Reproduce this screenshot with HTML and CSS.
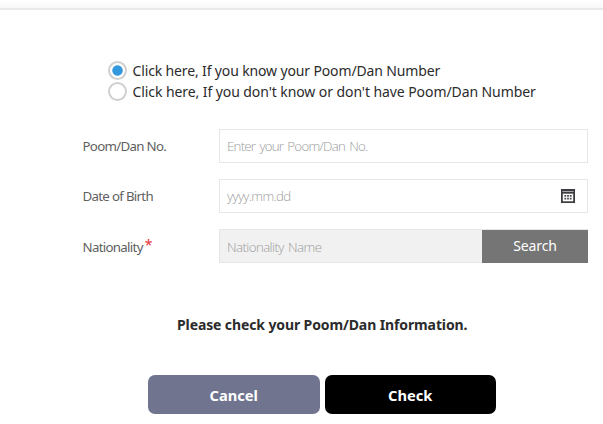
FILE: index.html
```
<!DOCTYPE html>
<html lang="en">
<head>
<meta charset="utf-8">
<title>Poom/Dan Information</title>
<link rel="stylesheet" href="styles.css">
</head>
<body>
<header class="topbar"></header>
<form class="form">
  <div class="choices">
    <label class="choice choice-known"><input class="radio" type="radio" name="known" checked><span>Click here, If you know your Poom/Dan Number</span></label>
    <label class="choice choice-unknown"><input class="radio" type="radio" name="known"><span>Click here, If you don't know or don't have Poom/Dan Number</span></label>
  </div>
  <div class="fields">
    <div class="row">
      <label class="label" for="number">Poom/Dan No.</label>
      <div class="control"><input class="input input-number" id="number" type="text" placeholder="Enter your Poom/Dan No."></div>
    </div>
    <div class="row">
      <label class="label" for="birth">Date of Birth</label>
      <div class="control">
        <input class="input input-birth" id="birth" type="text" placeholder="yyyy.mm.dd">
        <svg class="calendar" viewBox="0 0 14 14" width="14" height="14" aria-hidden="true">
          <path fill="#3d3b3f" d="M0 0h14v14H0z"/>
          <path fill="#aaa8ac" d="M1.5 2h11v1h-11z"/>
          <path fill="#fff" d="M1.8 4.7h10.4v7.6H1.8z"/>
          <path fill="#4b494d" d="M3.4 6h1.8v1.8H3.4zM6.1 6h1.8v1.8H6.1zM8.8 6h1.8v1.8H8.8zM3.4 8.8h1.8v1.8H3.4zM6.1 8.8h1.8v1.8H6.1zM8.8 8.8h1.8v1.8H8.8z"/>
        </svg>
      </div>
    </div>
    <div class="row">
      <label class="label label-nation" for="nation">Nationality<span class="required">*</span></label>
      <div class="control disabled">
        <input class="input input-nation" id="nation" type="text" placeholder="Nationality Name" readonly>
        <button class="search" type="button">Search</button>
      </div>
    </div>
  </div>
  <p class="notice">Please check your Poom/Dan Information.</p>
  <div class="actions">
    <button class="button cancel" type="button">Cancel</button>
    <button class="button check" type="button">Check</button>
  </div>
</form>
</body>
</html>
```
FILE: styles.css
```
* { box-sizing: border-box; }

body {
  margin: 0;
  height: 424px;
  overflow: hidden;
  background: #fff;
  color: #2b2b2b;
  font-family: "Noto Sans", "Open Sans", sans-serif;
  font-size: 14px;
}

button, input { font-family: inherit; }

.topbar {
  height: 10px;
  border-bottom: 2px solid #e9e9e9;
  background: linear-gradient(#fff, #f8f8f8);
}

.form { padding-top: 50px; }

.choices { padding-left: 108px; }

.choice {
  display: flex;
  align-items: center;
  gap: 5.5px;
  height: 21px;
  white-space: nowrap;
}

.choice-known { letter-spacing: -0.14px; }

.choice-unknown {
  height: 20px;
  letter-spacing: -0.08px;
}

.radio {
  appearance: none;
  flex: none;
  width: 19px;
  height: 19px;
  margin: 0;
  border: 2px solid #d0d0d0;
  border-radius: 50%;
  background: #fff;
}

.radio:checked {
  background: radial-gradient(circle, #3498dc 0 4.8px, #fff 5.6px);
}

.fields {
  display: grid;
  gap: 16px;
  margin-top: 28px;
  padding: 0 15px 0 82px;
}

.row {
  display: grid;
  grid-template-columns: 137px 1fr;
  align-items: center;
  height: 34px;
}

.label {
  padding-left: 0.5px;
  color: #5f5f5f;
  font-size: 13.3px;
  letter-spacing: -0.7px;
  white-space: nowrap;
}

.label-nation { padding-top: 1px; }

.required {
  margin-left: 2px;
  color: #e8323c;
  font-size: 14px;
  line-height: 1;
  vertical-align: 2px;
}

.control {
  display: flex;
  align-items: center;
  height: 34px;
  border: 1px solid #e6e6e6;
}

.input {
  flex: 1;
  min-width: 0;
  height: 100%;
  padding: 0 7px;
  border: 0;
  background: transparent;
  font-family: "Open Sans", "Noto Sans", sans-serif;
  font-size: 13.3px;
  font-weight: 300;
}

.input::placeholder { color: #9c9c9c; }

.input-number {
  letter-spacing: -0.78px;
  word-spacing: 1.5px;
}

.input-birth { letter-spacing: -0.65px; }

.input-nation {
  padding-top: 1px;
  letter-spacing: -0.6px;
  word-spacing: 1.5px;
}

.calendar {
  flex: none;
  margin-right: 12px;
}

.disabled { background: #f1f1f1; }

.search {
  flex: none;
  width: 106px;
  height: 33px;
  margin-right: -1px;
  padding: 0 0 2px;
  border: 0;
  background: #757575;
  color: #fff;
  font-size: 14px;
  letter-spacing: -0.1px;
}

.notice {
  margin: 52px 0 0;
  padding-left: 177px;
  font-size: 14px;
  font-weight: 700;
  letter-spacing: -0.11px;
  line-height: 20px;
}

.actions {
  display: flex;
  gap: 5px;
  margin-top: 40px;
  padding-left: 148px;
}

.button {
  width: 171.5px;
  height: 39px;
  padding: 0;
  border: 0;
  border-radius: 7px;
  color: #fff;
  font-size: 14.7px;
  font-weight: 700;
}

.cancel { background: #70748f; }

.check { background: #000; }
```
